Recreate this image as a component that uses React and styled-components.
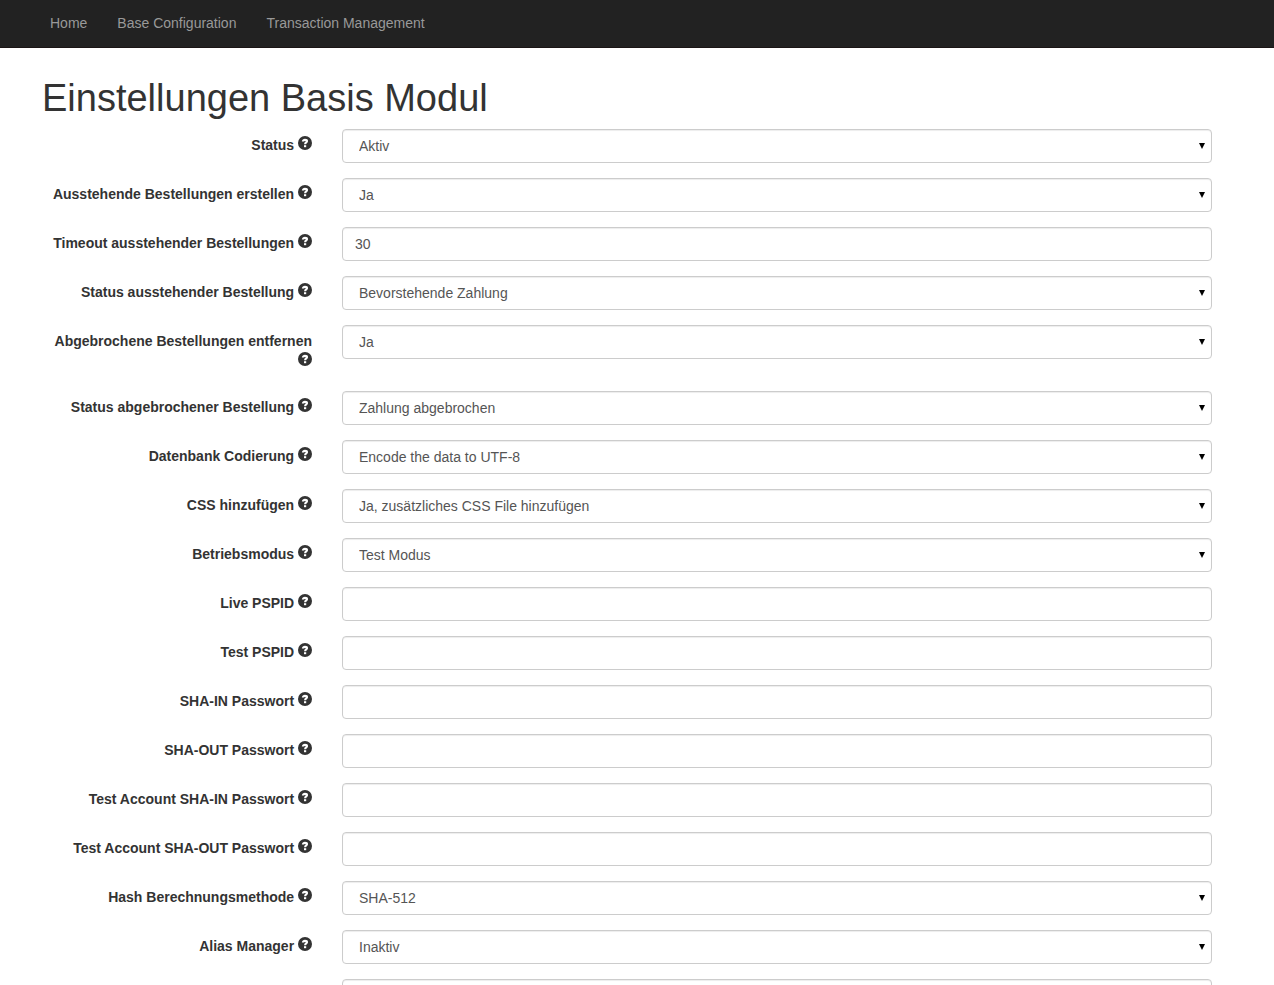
import React from 'react';
import styled, { createGlobalStyle } from 'styled-components';

const navigation = ['Home', 'Base Configuration', 'Transaction Management'];

const settings = [
  { id: 'status', label: 'Status', options: ['Aktiv', 'Inaktiv'] },
  { id: 'pending-create', label: 'Ausstehende Bestellungen erstellen', options: ['Ja', 'Nein'] },
  { id: 'pending-timeout', label: 'Timeout ausstehender Bestellungen', value: '30' },
  { id: 'pending-status', label: 'Status ausstehender Bestellung', options: ['Bevorstehende Zahlung'] },
  { id: 'cancelled-remove', label: 'Abgebrochene Bestellungen entfernen', options: ['Ja', 'Nein'] },
  { id: 'cancelled-status', label: 'Status abgebrochener Bestellung', options: ['Zahlung abgebrochen'] },
  { id: 'encoding', label: 'Datenbank Codierung', options: ['Encode the data to UTF-8'] },
  { id: 'css', label: 'CSS hinzufügen', options: ['Ja, zusätzliches CSS File hinzufügen'] },
  { id: 'mode', label: 'Betriebsmodus', options: ['Test Modus'] },
  { id: 'live-pspid', label: 'Live PSPID' },
  { id: 'test-pspid', label: 'Test PSPID' },
  { id: 'sha-in', label: 'SHA-IN Passwort' },
  { id: 'sha-out', label: 'SHA-OUT Passwort' },
  { id: 'test-sha-in', label: 'Test Account SHA-IN Passwort' },
  { id: 'test-sha-out', label: 'Test Account SHA-OUT Passwort' },
  { id: 'hash', label: 'Hash Berechnungsmethode', options: ['SHA-512'] },
  { id: 'alias', label: 'Alias Manager', options: ['Inaktiv', 'Aktiv'] },
  { id: 'prefix' },
];

const HelpIcon = () => (
  <Help viewBox="0 0 14 14" aria-hidden="true">
    <circle cx="7" cy="7" r="7" fill="#333" />
    <path d="M4.9 5.6C4.9 4.4 5.7 3.9 7 3.9C8.3 3.9 9 4.4 9 5.2C9 6.5 7.1 6.4 7.1 8.3" fill="none" stroke="#fff" strokeWidth="2.1" />
    <path d="M6 9.2h2.2v2H6z" fill="#fff" />
  </Help>
);

const Setting = ({ id, label, options, value = '' }) => (
  <Row>
    <LabelColumn>
      {label && <Label htmlFor={id}>{label} <HelpIcon /></Label>}
    </LabelColumn>
    <FieldColumn>
      {options ? (
        <SelectBox>
          <Select id={id}>
            {options.map((option) => <option key={option}>{option}</option>)}
          </Select>
          <Arrow viewBox="0 0 6 6" aria-hidden="true"><path d="M0 0h6L3 6z" /></Arrow>
        </SelectBox>
      ) : (
        <Input id={id} type="text" defaultValue={value} aria-label={label ? undefined : 'Alias Prefix'} />
      )}
    </FieldColumn>
  </Row>
);

const App = () => {
  return (
    <>
      <GlobalStyle />
      <Navbar>
        {navigation.map((item) => <NavLink key={item} href="#">{item}</NavLink>)}
      </Navbar>
      <Content>
        <Header>Einstellungen Basis Modul</Header>
        <form>
          {settings.map((setting) => <Setting key={setting.id} {...setting} />)}
        </form>
      </Content>
    </>
  );
}

export default App

const GlobalStyle = createGlobalStyle`
  * {
    box-sizing: border-box;
  }

  body {
    margin: 0;
    background: white;
    color: #333;
    font-family: "Liberation Sans", Arial, sans-serif;
    font-size: 14px;
    line-height: 20px;
  }
`

const Navbar = styled.nav`
  display: flex;
  flex-wrap: wrap;
  min-height: 48px;
  padding: 0 35px;
  background: #222;
  border-bottom: 1px solid #1b1515;
`

const NavLink = styled.a`
  padding: 13px 15px;
  color: #999;
  text-decoration: none;

  &:hover {
    color: white;
  }
`

const Content = styled.main`
  padding: 30px 62px 0 42px;
`

const Header = styled.h1`
  margin: 0 0 11px;
  font-weight: 400;
  font-size: 38px;
  line-height: 40px;
`

const Row = styled.div`
  display: flex;
  align-items: flex-start;
  margin: 0 -15px 15px;
`

const LabelColumn = styled.div`
  width: 25%;
  padding: 0 15px;
  text-align: right;
`

const FieldColumn = styled.div`
  width: 75%;
  padding: 0 15px;
`

const Label = styled.label`
  display: block;
  padding: 6px 0 5px;
  font-weight: 700;
`

const Help = styled.svg`
  width: 14px;
  height: 14px;
  vertical-align: baseline;
`

const Input = styled.input`
  display: block;
  width: 100%;
  height: 34px;
  padding: 6px 12px;
  border: 1px solid #ccc;
  border-radius: 4px;
  background: white;
  box-shadow: inset 0 1px 1px rgba(0, 0, 0, 0.075);
  color: #555;
  font: inherit;

  &:focus {
    border-color: #66afe9;
    outline: 0;
  }
`

const SelectBox = styled.div`
  position: relative;
`

const Select = styled(Input).attrs({ as: 'select' })`
  padding: 6px 16px;
  appearance: none;
`

const Arrow = styled.svg`
  position: absolute;
  top: 14px;
  right: 7px;
  width: 6px;
  height: 6px;
  pointer-events: none;
`
